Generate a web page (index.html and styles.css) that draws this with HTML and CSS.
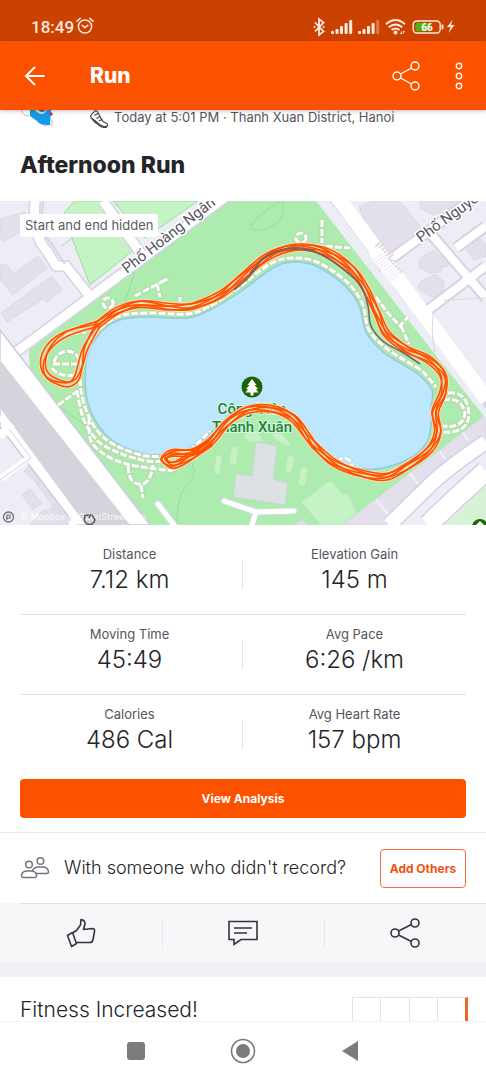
FILE: index.html
```html
<!DOCTYPE html>
<html lang="en">
<head>
<meta charset="utf-8">
<meta name="viewport" content="width=device-width, initial-scale=1">
<title>Run</title>
<link rel="stylesheet" href="styles.css">
</head>
<body>
<div class="status">
  <span class="clock">18:49</span>
  <svg class="alarm" width="18" height="18" viewBox="0 0 18 18"><g fill="none" stroke="currentColor" stroke-width="1.5" stroke-linecap="round" stroke-linejoin="round"><circle cx="9" cy="9.5" r="6.6"/><path d="M.9 4.3 4.2 1.4M13.8 1.4l3.3 2.9M6.2 8.3l2.6 2.3 3-2.3"/></g></svg>
  <svg class="signals" width="144" height="20" viewBox="312 17 144 20">
    <path d="M315 22.500 323.500 31.500 319 35V19L323.500 22.500 315 31.500" fill="none" stroke="currentColor" stroke-width="1.800"/>
    <g fill="currentColor"><circle cx="314.500" cy="27" r="1"/><circle cx="323.600" cy="27" r="1"/>
    <rect x="331" y="31" width="3" height="3" rx="1"/><rect x="335.500" y="29" width="3" height="5" rx="1"/><rect x="340" y="26" width="3" height="8" rx="1"/><rect x="344.600" y="23" width="3" height="11" rx="1"/><rect x="349.200" y="20" width="3" height="14" rx="1"/>
    <rect x="358" y="31" width="3" height="3" rx="1"/><rect x="362.500" y="29" width="3" height="5" rx="1"/><rect x="367" y="26" width="3" height="8" rx="1"/><rect x="371.600" y="23" width="3" height="11" rx="1"/><rect x="376.200" y="20" width="3" height="14" rx="1" opacity=".35"/>
    <circle cx="395.500" cy="32.400" r="2"/><path d="m400 34 2-3.500v3.500zM403 31h2l-2 3.500z"/></g>
    <path d="M386 24.200q9.500-8.200 19 0M388.700 27.200q6.800-5.600 13.600 0M391.500 30q4-3 8 0" fill="none" stroke="currentColor" stroke-width="1.900"/>
    <rect x="413.200" y="21" width="27" height="12" rx="3.500" fill="none" stroke="currentColor" stroke-width="1.400"/>
    <rect x="415.500" y="23" width="15" height="8" rx="1" fill="#4fb411"/><rect x="441.500" y="24.500" width="2" height="5" rx="1" fill="currentColor"/>
    <text x="427" y="30.500" class="battery">66</text>
    <path d="m452.500 20-5.500 7h3.500l-2 6 6-8h-3.500z" fill="currentColor"/>
  </svg>
</div>

<header class="appbar">
  <button class="icon-button" aria-label="Back"><svg width="22" height="22" viewBox="0 0 22 22"><path d="M20.500 11H2.500M11 2 2 11l9 9" fill="none" stroke="currentColor" stroke-width="2"/></svg></button>
  <h1>Run</h1>
  <button class="icon-button" aria-label="Share"><svg width="30" height="30" viewBox="0 0 30 30"><g fill="none" stroke="currentColor" stroke-width="1.400"><circle cx="5" cy="15" r="4"/><circle cx="23" cy="5" r="4"/><circle cx="23" cy="25" r="4"/><path d="m8.500 13 11-6M8.500 17l11 6"/></g></svg></button>
  <button class="icon-button" aria-label="More options"><svg width="10" height="30" viewBox="0 0 10 30"><g fill="none" stroke="currentColor" stroke-width="1.400"><circle cx="5" cy="5" r="2.700"/><circle cx="5" cy="15" r="2.700"/><circle cx="5" cy="25" r="2.700"/></g></svg></button>
</header>

<main>
  <section class="intro">
    <div class="meta">
      <svg width="36" height="18" viewBox="20 110 36 18"><path d="M30 110h21l-1 15q-10 1-13-4l-7-5z" fill="#119be8"/><path d="M35 110q7 8 12 0z" fill="#d8dce4"/><path d="M38 110q4 4 8 0z" fill="#555b66"/><circle cx="51" cy="114" r="1.700" fill="#b53562"/><path d="M22 110q0 6 7 6M45 124v3M51 119q3 3 0 7" fill="none" stroke="#b9bcc4"/></svg>
      <svg class="shoe" width="19" height="18" viewBox="89 109 19 18"><path d="M95.500 109.500q-3 2.500-5 5.500 1 4 7 8 4 4 8.500 3.500 2.500-1.500 1-4-4-1-6-5l-3.500-7zM90.500 116.500q5 3 9 7 4 3 8 1.500M94.500 114.500l4-2.500M96.500 117.500l4-2.500M99 120l3.500-2" fill="none" stroke="#45464d" stroke-width="1.100" stroke-linejoin="round"/></svg>
      <span>Today at 5:01 PM · Thanh Xuan District, Hanoi</span>
    </div>
    <h2>Afternoon Run</h2>
  </section>

  <div class="map">
    <svg class="map-art" viewBox="0 201 486 324" role="img" aria-label="Route map">
      <rect y="201" width="486" height="324" fill="#ededf6"/>
      <g fill="#e3e0eb" stroke="#dad5df" stroke-width=".8">
        <path d="M0 219 25 212 31 226 5 241 0 238zM0 265l6-1 8 10 24-18 9 12-34 27L0 279zM1 313l51-37 10 14-15 12-4-3-36 23zM24 471l8-8 14 13-8 8zM36 483l10-6 22 28-10 8zM22 495l8-6 12 14-9 7zM30 525l12-14 16-3 10 17zM50 508l10-8 16 17-8 8z"/>
        <path d="m359 207 14-6h26l24 28-32 28-15-5zM420 201h52l-29 20-22-13zM420 258l14-8 6 6 9-4-1 14-6 1-1 5-12 1-10-6zM420 282l15-8 9 8-1 14-12 1-13-8zM465 247l15-8 6 5v12l-12 4z"/>
        <path d="M342 525 483 416l3 5v16L386 525z"/>
      </g>
      <path d="M29 350 228 201h88L441 362l43 54-142 109H147L30 380z" fill="#aeebae"/>
      <path d="M63 215 74 201h32l29 48-45 36zM113 201h85l-53 37z" fill="#c4f3c4" stroke="#9be09d"/>
      <path d="m62 246 18-15-11-13" fill="none" stroke="#9be09d"/>
      <path d="M279 201q-45 32-18 29 27-5 21-29M125 302q7-20 10-32M60 407l28 20M192 463q7 12-7 25-9 11-8 37" fill="none" stroke="#9bdba0"/>
      <g fill="none" stroke-linejoin="round">
        <g stroke="#d6d3e4">
          <path d="m8 358 223-165M35 201q-3 35 12 50l9 15h10l22 28M103 201l39 54" stroke-width="12"/>
          <path d="m333 195 157 210M391 259l95-70M430 233l56 65M428 310l58-44M456 248l30-22" stroke-width="12"/>
        </g>
        <g stroke="#fff">
          <path d="m8 358 223-165M103 201l39 54" stroke-width="9"/><path d="M35 201q-3 35 12 50l9 15h10l22 28" stroke-width="9"/>
          <path d="m336 195 151 205" stroke-width="15"/><path d="M391 259l95-70M430 233l56 65M428 310l58-44M456 248l30-22" stroke-width="8"/>
        </g>
        <path d="M43 201q-4 32 9 43l13 20" stroke="#d6d3e4" stroke-width="2"/>
        <path d="M434 309q-4 25 1 43M444 300l42-2" stroke="#d9d9e3"/>
      </g>
      <path d="M0 330 150 525H75L0 427z" fill="#fff" stroke="#cdcbe0" stroke-width="1.500"/>
      <path d="M0 360 130 525H86L0 408z" fill="#d4d4dd"/>
      <path d="m0 435 12-11M0 479l32-23M70 525l10-7M0 417l10 10-10 10" fill="none" stroke="#fff" stroke-width="7"/>
      <path d="m9 429 22 29-31 22" fill="none" stroke="#d3cfe4"/>
      <path d="m389 525 40-39q18-18 57-44" fill="none" stroke="#d3cfe4" stroke-width="17"/>
      <path d="m389 525 40-39q18-18 57-44" fill="none" stroke="#fff" stroke-width="14"/>
      <path d="m428 525 27-26 31-28" fill="none" stroke="#d3cfe4" stroke-width="22"/>
      <path d="m428 525 27-26 31-28" fill="none" stroke="#fff" stroke-width="19"/>
      <path d="m446 525 40-40v40z" fill="#d6f3d5"/>
      <path d="m376 500 12 14M410 473l8 11M440 451l5 8M463 432l5 9" stroke="#f3f1f7" stroke-width="2"/>
      <path d="M378 243l13 15-2 10M378 268l10-4 12 10" fill="none" stroke="#e6d8dc" stroke-width="9" stroke-dasharray="2 1.500"/>
      <path d="m374 251 24 31" stroke="#fff" stroke-width="13"/>
      <path d="m378 256 17 23" stroke="#ececf3" stroke-width="12" stroke-dasharray="1 2"/>

      <path data-curve="closed" data-points="86,362 91,346 105,328 123,319 150,317 187,318 210,310 240,292 273,268 293,262 316,266 343,284 359,305 366,332 383,352 402,364 418,374 432,390 431,407 431,425 427,442 412,457 383,468 355,468 334,461 314,440 293,420 268,405 240,408 220,424 203,440 180,453 160,455 143,454 113,441 95,420 86,393" fill="#bde6ff" stroke="#94c9df" stroke-width="1.500"/>

      <g fill="#c5f3c5" stroke="#b8e9b8">
        <path d="m243 435 13-4 8 10-15 1zM272 434l7-3 12 13-2 3-15-8zM232 446l7 1-3 18-7-1zM216 455l6 1-2 18-6-1zM288 455l7 2-4 16-6-2zM301 467l7 1-3 18-7-1zM301 502l30-22 11 14 5-1 10 20-16 12h-20z"/>
      </g>
      <path d="m256 442 21 4-4 33 15 4-3 22-52-8 3-23 16 2zM294 525l8-6 6 6z" fill="#dce1e4" stroke="#ccd0d7" stroke-width=".8"/>
      <path d="m224 501 32 11 38-1M256 512l-4 13M158 504l16 21" fill="none" stroke="#d4dce5" stroke-width="7" stroke-linecap="round"/>
      <path d="m224 501 32 11 38-1M256 512l-4 13M158 504l16 21" fill="none" stroke="#fff" stroke-width="5" stroke-linecap="round"/>

      <g class="paths" fill="none">
        <path data-curve data-points="86,352 94,336 107,323 123,315 150,313 187,314 208,307 238,288 270,264 292,258 317,262 346,281 362,303 369,330 386,348 406,361 422,371 436,387"/>
        <path data-curve data-points="80,370 81,391 88,415 101,435 121,448 146,456 167,456"/>
        <path data-curve data-points="77,391 84,420 99,442 122,454 147,461 163,461"/>
        <path data-curve data-points="89,418 91,441 107,456 127,464 150,468 172,470 180,463"/>
        <path d="m58 405 20-14M54 362q3-10 14-11 12 2 12 14M53 364h24M52 368q7 10 24 7M64 335l22-3M128 466q1 19 12 18 10 1 13-19M141 485l2 13M135 296l32-17M157 284l3 13M160 304l3 10M322 220v23M308 245l42 3M180 302v-5M376 297l12 16 12 13 8-9M401 326l8 18M161 282l7-3M337 462q7-8 14 0l3 7M190 451l20-20"/>
        <path d="M448 393q19-2 21 20 0 22-30 19M443 400q18-4 22 13-2 16-22 13"/>
        <circle cx="108" cy="303" r="5"/><circle cx="301" cy="238" r="5"/>
      </g>

      <g class="streets">
        <text transform="translate(127 274) rotate(-38)">Phố Hoàng Ngân</text>
        <text transform="translate(421 243) rotate(-36)">Phố Nguyễn</text>
      </g>
      <circle cx="252" cy="387" r="10.500" fill="#1d6504"/><path d="m252 379-4.500 6h2l-3.500 4h2l-2.500 3.500h5v3h3v-3h5l-2.500-3.500h2l-3.500-4h2z" fill="#fff"/>
      <circle cx="480" cy="527" r="8" fill="#1d6504"/><path d="m480 521-5 5h10z" fill="#fff"/>
      <g class="place"><text x="252" y="414">Công Viên</text><text x="252" y="432">Thanh Xuân</text></g>
      <g id="route" fill="none" stroke-linecap="round" stroke-linejoin="round"></g>
      <path data-curve data-points="234,290 249,277 262,260 278,251 300,249 322,255 343,269 361,286 368,306 371,326 384,342 402,352 420,364" fill="none" stroke="#6a6468" stroke-width="1.500"/>
      <path data-curve data-points="250,273 265,257 284,249 308,249 331,260 350,274" fill="none" stroke="#9c5540" stroke-width="1.500"/>

      <circle cx="8.500" cy="517" r="5" fill="none" stroke="#70717a" stroke-width="1.300"/><path d="M7 520v-5h3v3H6" fill="none" stroke="#70717a" stroke-width="1.200"/>
      <text x="20" y="520" class="credit">© Mapbox © OpenStreetMap</text>
      <path d="M86 515q-4 5 1 9 6 2 8-4l-3-5M84 516l5-1M91 514l-2 4" fill="none" stroke="#55565c" stroke-width="1.500"/>
    </svg>
    <span class="privacy">Start and end hidden</span>
  </div>

  <dl class="stats">
    <div class="stat"><dt>Distance</dt><dd>7.12 km</dd></div>
    <div class="stat"><dt>Elevation Gain</dt><dd>145 m</dd></div>
    <div class="stat"><dt>Moving Time</dt><dd>45:49</dd></div>
    <div class="stat"><dt>Avg Pace</dt><dd>6:26 /km</dd></div>
    <div class="stat"><dt>Calories</dt><dd>486 Cal</dd></div>
    <div class="stat"><dt>Avg Heart Rate</dt><dd>157 bpm</dd></div>
  </dl>

  <div class="analysis"><button class="primary">View Analysis</button></div>

  <section class="others">
    <svg width="30" height="24" viewBox="0 0 30 24"><g fill="#fff" stroke="#73747d" stroke-width="1.500"><circle cx="20.500" cy="5" r="3.300"/><path d="M19 11h4q5 0 5.500 5 0 1.500-2 1.500H14q-2 0-2-1.500 1-5 7-5z"/><circle cx="9" cy="8.500" r="3.300"/><path d="M7 15h4.500q4 0 5 4 .5 2.500-2 2.500h-11q-2.500 0-2-2.500 1-4 5.500-4z"/></g></svg>
    <p>With someone who didn't record?</p>
    <button class="outline">Add Others</button>
  </section>

  <section class="social">
    <button aria-label="Give kudos"><svg width="30" height="30" viewBox="0 0 30 30"><path d="m1.500 17.500 5-3 4 11-5 3zM6.500 15l4-2.500L14.500 7l.5-5.500q4 .5 4 4.500l-1.500 5.500 9-1q2.500.5 2 3l-1.500 8q-.5 3-3 3H10.500" fill="none" stroke="currentColor" stroke-width="1.600" stroke-linejoin="round"/></svg></button>
    <button aria-label="Comment"><svg width="30" height="30" viewBox="0 0 30 30"><path d="M1 3.500h28v18H13l-7 5v-5H1zM6 10h18M6 15h13" fill="none" stroke="currentColor" stroke-width="1.600"/></svg></button>
    <button aria-label="Share activity"><svg width="30" height="30" viewBox="0 0 30 30"><g fill="none" stroke="currentColor" stroke-width="1.600"><circle cx="5" cy="15" r="4"/><circle cx="25" cy="5" r="4"/><circle cx="25" cy="25" r="4"/><path d="m8.500 13 13-6.500M8.500 17l13 6.500"/></g></svg></button>
  </section>

  <section class="fitness">
    <h3>Fitness Increased!</h3>
    <div class="chart" aria-hidden="true"><i></i><i></i><i></i><i></i></div>
  </section>
</main>

<nav class="system">
  <button aria-label="Recent apps"><svg width="18" height="18"><rect width="18" height="18" rx="3" fill="currentColor"/></svg></button>
  <button aria-label="Home"><svg width="26" height="26"><circle cx="13" cy="13" r="11.500" fill="none" stroke="currentColor" stroke-width="1.600"/><circle cx="13" cy="13" r="7" fill="currentColor"/></svg></button>
  <button aria-label="Back"><svg width="18" height="22"><path d="M1 11 17 1v20z" fill="currentColor"/></svg></button>
</nav>
<script src="map.js"></script>
</body>
</html>
```

FILE: styles.css
```css
* { box-sizing: border-box; }
body {
  margin: 0;
  min-height: 100vh;
  display: flex;
  flex-direction: column;
  background: #fff;
  color: #242529;
  font-family: Inter, "Noto Sans", sans-serif;
}
h1, h2, h3, p, dl, dd { margin: 0; }
button { border: 0; background: none; padding: 0; color: inherit; font-family: inherit; display: flex; align-items: center; justify-content: center; }
svg { display: block; flex: none; }

.status {
  height: 41px;
  padding: 12px 30px 0 31px;
  display: flex;
  gap: 2px;
  background: #cb4100;
  color: #ffe9df;
}
.clock { font: 500 17px/30px Roboto, sans-serif; }
.alarm { margin-top: 5px; }
.signals { margin: 5px 0 0 auto; }
.battery { font: 700 10px Roboto, sans-serif; fill: #fff; text-anchor: middle; }

.appbar {
  height: 69px;
  padding: 0 22px 0 24px;
  display: flex;
  align-items: center;
  background: #fc5200;
  color: #fff;
  box-shadow: 0 1px 4px rgba(80, 30, 0, .3);
  position: relative;
}
.appbar h1 { flex: 1; margin-left: 44px; font-size: 21px; line-height: 28px; font-weight: 800; }
.appbar .icon-button + .icon-button { margin-left: 32px; }

.meta {
  height: 18px;
  padding-left: 20px;
  display: flex;
  overflow: hidden;
  font-size: 13px;
  line-height: 14px;
  color: #55565d;
  white-space: nowrap;
}
.shoe { margin: 0 6px 0 33px; }
.intro h2 { padding: 21px 20px 20px; font-size: 23px; line-height: 32px; font-weight: 800; }

.map { position: relative; }
.map-art { width: 100%; height: auto; }
.privacy {
  position: absolute;
  left: 20px;
  top: 13px;
  padding: 0 5px;
  border-radius: 2px;
  background: #fff;
  color: #5b5c63;
  font-size: 13px;
  line-height: 23px;
}
.paths { stroke: #fff; stroke-width: 3; stroke-dasharray: 7 2; filter: drop-shadow(0 0 1px #b9bfa5); }
.streets { font: 400 15px Roboto, "Noto Sans", sans-serif; fill: #55565e; stroke: #fff; stroke-width: 3px; paint-order: stroke; }
.place { font: 500 15px Roboto, "Noto Sans", sans-serif; fill: #22823b; stroke: #d9f8df; stroke-width: 2px; paint-order: stroke; text-anchor: middle; }
.credit { font: 500 9px Inter, sans-serif; fill: #fff; opacity: .75; }

.stats { padding: 10px 20px 0; display: grid; grid-template-columns: 1fr 1fr; text-align: center; }
.stat { position: relative; height: 80px; padding-top: 10px; border-bottom: 1px solid #e3e3e5; }
.stat:nth-last-child(-n+2) { border-bottom-color: transparent; }
.stat:nth-child(odd) { padding-right: 4px; }
.stat:nth-child(odd)::after { content: ""; position: absolute; right: 0; top: 25px; height: 30px; width: 1px; background: #e5e5e8; }
.stat dt { font-size: 13px; line-height: 18px; color: #55565c; }
.stat dd { padding-top: 3px; font-size: 24px; line-height: 28px; font-weight: 300; }

.analysis { padding: 4px 20px 14px; border-bottom: 1px solid #e9e9ec; }
.primary { width: 100%; height: 39px; border-radius: 4px; background: #fc5200; color: #fff; font-size: 12px; font-weight: 700; }

.others { height: 70px; padding: 0 20px; display: flex; align-items: center; }
.others p { flex: 1; margin-left: 14px; font-size: 18px; line-height: 24px; font-weight: 300; }
.outline { width: 86px; height: 39px; border: 1px solid #f27043; border-radius: 4px; color: #ee5210; font-size: 12px; font-weight: 700; }

.social { height: 59px; display: grid; grid-template-columns: 1fr 1fr 1fr; background: linear-gradient(to right, transparent 20px, #e2e2e6 20px) top / 100% 1px no-repeat #f7f7fa; }
.social button { position: relative; color: #333439; }
.social button + button::before { content: ""; position: absolute; left: 0; top: 15px; height: 30px; width: 1px; background: #e9e9ed; }

.fitness { display: flex; justify-content: space-between; align-items: flex-end; padding: 20px 18px 0 20px; border-top: 15px solid #f1f1f5; }
.fitness h3 { font-size: 21px; line-height: 22px; font-weight: 300; }
.chart { width: 116px; height: 24px; display: flex; border-top: 1px solid #e3e2e8; border-right: 3px solid #ee6529; }
.chart i { flex: 1; border-left: 1px solid #e3e2e8; }

.system { height: 59px; padding: 0 83px; display: grid; grid-template-columns: 1fr 1fr 1fr; border-top: 1px solid #f5f5f6; color: #7b7b7b; }
```

FILE: map.js
```js
// Smooth curve through a list of [x, y] points.
function curve(points, closed) {
  const n = points.length;
  const at = i => closed ? points[(i + n) % n] : points[Math.max(0, Math.min(n - 1, i))];
  const f = v => v.toFixed(1);
  let d = `M${points[0]}`;
  for (let i = 0; i < (closed ? n : n - 1); i++) {
    const [a, b, c, e] = [at(i - 1), at(i), at(i + 1), at(i + 2)];
    d += `C${f(b[0] + (c[0] - a[0]) / 6)} ${f(b[1] + (c[1] - a[1]) / 6)} ${f(c[0] - (e[0] - b[0]) / 6)} ${f(c[1] - (e[1] - b[1]) / 6)} ${f(c[0])} ${f(c[1])}`;
  }
  return closed ? d + 'Z' : d;
}
const parse = text => text.trim().split(/\s+/).map(p => p.split(',').map(Number));

document.querySelectorAll('[data-points]').forEach(path => {
  path.setAttribute('d', curve(parse(path.dataset.points), path.dataset.curve === 'closed'));
});

const loop = parse(`97,324 67,333 50,346 43,363 48,377 66,384 76,379 81,365 85,348 97,326`);
const track = parse(`97,325 117,311 140,304 170,307 193,306 220,295 240,279 267,257 290,248 313,248 333,255 353,270
  366,290 377,313 386,333 406,349 429,360 443,375 443,393 435,412 438,432 429,450 403,469 383,477 356,472 333,462
  316,447 307,436 293,418 272,409 247,410 227,423 210,442 193,452 172,453 164,459 173,465 190,457 210,443`);

// Each lap drifts to either side of the line it follows.
function lap(line, amount, phase) {
  return line.map((p, i) => {
    const a = line[Math.max(0, i - 1)];
    const b = line[Math.min(line.length - 1, i + 1)];
    const dx = b[0] - a[0], dy = b[1] - a[1], len = Math.hypot(dx, dy) || 1;
    const shift = amount * Math.sin(i * 0.7 + phase);
    return [p[0] - dy / len * shift, p[1] + dx / len * shift];
  });
}

const laps = [
  ...[[3, 0], [3, 2], [3, 4]].map(([a, p]) => curve(lap(loop, a, p))),
  ...[[3.5, 0], [3.5, 1.3], [3.5, 2.7], [3.5, 4], [3, 5.2]].map(([a, p]) => curve(lap(track, a, p)))
];
const route = document.getElementById('route');
const draw = (d, stroke, width) => {
  const path = document.createElementNS('http://www.w3.org/2000/svg', 'path');
  path.setAttribute('d', d);
  path.setAttribute('stroke', stroke);
  path.setAttribute('stroke-width', width);
  route.append(path);
};
laps.forEach(d => draw(d, '#f8dfb8', 3.5));
laps.forEach(d => draw(d, '#fc5200', 1.6));
```
